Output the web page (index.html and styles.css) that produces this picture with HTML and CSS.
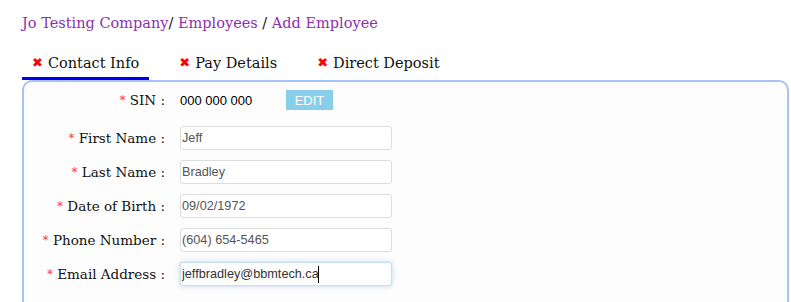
FILE: index.html
```html
<!DOCTYPE html>
<html lang="en">
<head>
  <meta charset="UTF-8">
  <title>Add Employee</title>
  <link rel="stylesheet" href="styles.css">
</head>
<body>
  <div class="page">
    <div class="breadcrumb">
      <a href="#">Jo Testing Company</a>/ <a href="#">Employees</a> / <a href="#">Add Employee</a>
    </div>

    <ul class="tabs">
      <li class="tab active"><span class="tab-icon">&#10006;</span>Contact Info</li>
      <li class="tab"><span class="tab-icon">&#10006;</span>Pay Details</li>
      <li class="tab"><span class="tab-icon">&#10006;</span>Direct Deposit</li>
    </ul>

    <div class="panel">
      <div class="form">
        <label class="form-label sin-label"><span class="req">*</span> SIN :</label>
        <div class="sin-value">
          <span class="sin-number">000 000 000</span>
          <button class="edit-btn">EDIT</button>
        </div>

        <label class="form-label"><span class="req">*</span> First Name :</label>
        <input class="form-input" type="text" value="Jeff">

        <label class="form-label"><span class="req">*</span> Last Name :</label>
        <input class="form-input" type="text" value="Bradley">

        <label class="form-label"><span class="req">*</span> Date of Birth :</label>
        <input class="form-input" type="text" value="09/02/1972">

        <label class="form-label"><span class="req">*</span> Phone Number :</label>
        <input class="form-input" type="text" value="(604) 654-5465">

        <label class="form-label"><span class="req">*</span> Email Address :</label>
        <div class="input-wrap">
          <input class="form-input focused" type="text" value="jeffbradley@bbmtech.ca">
          <span class="caret"></span>
        </div>
      </div>
    </div>
  </div>
</body>
</html>
```

FILE: styles.css
```css
body {
  margin: 0;
  background-color: #ffffff;
  font-family: "DejaVu Serif", serif;
  font-size: 14.5px;
  color: #111;
}

.page {
  padding: 12px 2px 0 22px;
}

.breadcrumb {
  line-height: 22px;
  color: #111;
}

.breadcrumb a {
  color: #8e2fae;
  text-decoration: none;
}

.tabs {
  list-style: none;
  margin: 15px 0 0 0;
  padding: 0;
  display: flex;
  gap: 20px;
}

.tab {
  padding: 4px 10px 4px 10px;
  line-height: 20px;
  border-bottom: 3px solid transparent;
  display: flex;
  align-items: center;
}

.tab.active {
  border-bottom-color: #0000ee;
}

.tab-icon {
  color: #ff0000;
  font-family: "DejaVu Sans", sans-serif;
  font-size: 13px;
  margin-right: 5px;
}

.panel {
  border: 2px solid #a4c3fb;
  border-radius: 10px 10px 0 0;
  background-color: #fdfdfd;
  height: 240px;
  padding-top: 6px;
}

.form {
  display: grid;
  grid-template-columns: 141px 1fr;
  column-gap: 15px;
  row-gap: 10px;
  align-items: center;
}

.form-label {
  text-align: right;
  white-space: nowrap;
  line-height: 24px;
  font-size: 13.5px;
}

.req {
  color: #ff3b3b;
  font-family: "DejaVu Sans", sans-serif;
  font-size: 12px;
  vertical-align: 1px;
}

.sin-label {
  margin-bottom: 4px;
}

.sin-value {
  display: flex;
  align-items: center;
  margin-bottom: 4px;
  font-family: "Liberation Sans", Arial, sans-serif;
  font-size: 13px;
  color: #000;
}

.sin-number {
  width: 106px;
}

.edit-btn {
  background-color: #87ceeb;
  color: #ffffff;
  border: none;
  font-family: "Liberation Sans", Arial, sans-serif;
  font-size: 13px;
  width: 47px;
  height: 20px;
  padding: 0;
}

.form-input {
  box-sizing: border-box;
  width: 212px;
  height: 24px;
  padding: 1px 2px 1px 1px;
  border: 1px solid #dadde2;
  border-radius: 3px;
  background-color: #ffffff;
  font-family: "Liberation Sans", Arial, sans-serif;
  font-size: 12.7px;
  color: #555;
  outline: none;
}

.input-wrap {
  display: flex;
  position: relative;
}

.form-input.focused {
  border-color: #c9dcf0;
  box-shadow: 0 0 5px rgba(110, 160, 220, 0.45);
  color: #333;
}

/* text caret of the focused field */
.caret {
  position: absolute;
  left: 138px;
  top: 4px;
  width: 1px;
  height: 17px;
  background-color: #000;
}
```
